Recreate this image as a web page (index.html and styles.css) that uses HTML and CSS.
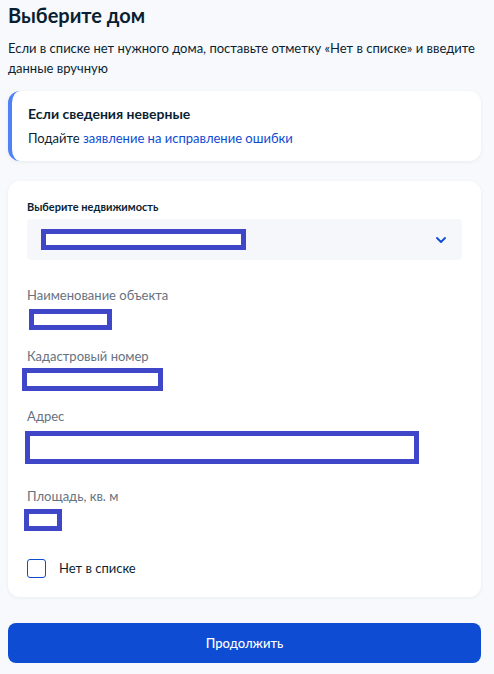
FILE: index.html
```html
<!DOCTYPE html>
<html lang="ru">
<head>
<meta charset="utf-8">
<link rel="stylesheet" href="styles.css">
</head>
<body>
<div class="page">
  <h1 class="title">Выберите дом</h1>
  <p class="subtitle">Если в списке нет нужного дома, поставьте отметку «Нет в списке» и введите данные вручную</p>

  <div class="info">
    <div class="info-title">Если сведения неверные</div>
    <div class="info-text">Подайте <a class="link" href="#">заявление на исправление ошибки</a></div>
  </div>

  <div class="card">
    <div class="select-label">Выберите недвижимость</div>
    <div class="select">
      <div class="redact redact-select"></div>
      <svg class="chevron" width="10" height="6" viewBox="0 0 10 6"><path d="M1 1l4 4 4-4" fill="none" stroke="#0d4cd3" stroke-width="1.8" stroke-linecap="round" stroke-linejoin="round"/></svg>
    </div>

    <div class="label l-name">Наименование объекта</div>
    <div class="redact r-name"></div>

    <div class="label l-cad">Кадастровый номер</div>
    <div class="redact r-cad"></div>

    <div class="label l-addr">Адрес</div>
    <div class="redact r-addr"></div>

    <div class="label l-area">Площадь, кв. м</div>
    <div class="redact r-area"></div>

    <label class="check">
      <span class="box"></span>
      <span class="check-text">Нет в списке</span>
    </label>
  </div>

  <button class="btn">Продолжить</button>
</div>
</body>
</html>
```

FILE: styles.css
```css
* { box-sizing: border-box; }
html, body { margin: 0; padding: 0; }
body {
  background: #f7f9fc;
  font-family: Lato, "Noto Sans", sans-serif;
  color: #0b1f33;
}
.page {
  width: 473px;
  margin-left: 8px;
  padding-top: 1px;
}
.title {
  margin: 0;
  font-size: 20px;
  line-height: 28px;
  font-weight: 700;
  color: #0b1f33;
}
.subtitle {
  margin: 9px 0 0;
  font-size: 13px;
  line-height: 20px;
  color: #0b1f33;
}
.info {
  margin-top: 13px;
  background: #fff;
  border-radius: 12px;
  border-left: 4px solid #4f82f7;
  padding: 13px 16px 13px 16px;
  box-shadow: 0 1px 4px rgba(11, 31, 51, 0.06);
}
.info-title {
  font-size: 14px;
  line-height: 20px;
  font-weight: 700;
}
.info-text {
  margin-top: 4px;
  font-size: 13px;
  line-height: 20px;
  color: #0b1f33;
}
.link {
  color: #0d4cd3;
  text-decoration: none;
}
.card {
  margin-top: 20px;
  background: #fff;
  border-radius: 12px;
  padding: 16px 19px 19px;
  box-shadow: 0 1px 4px rgba(11, 31, 51, 0.06);
}
.select-label {
  font-size: 11px;
  line-height: 20px;
  font-weight: 700;
  color: #0b1f33;
}
.select {
  margin-top: 2px;
  height: 41px;
  background: #f5f7fa;
  border-radius: 4px;
  display: flex;
  align-items: center;
  justify-content: space-between;
  padding: 0 16px 0 14px;
}
.redact {
  border: 5px solid #4046c8;
  background: #fff;
}
.redact-select { width: 205px; height: 21px; }
.chevron { display: block; margin-top: 1px; }
.label {
  font-size: 13px;
  line-height: 20px;
  color: #66727f;
}
.l-name { margin-top: 25px; }
.r-name { margin-top: 4px; margin-left: 2px; width: 83px; height: 21px; }
.l-cad { margin-top: 16px; }
.r-cad { margin-top: 2px; margin-left: -5px; width: 141px; height: 23px; }
.l-addr { margin-top: 15px; }
.r-addr { margin-top: 5px; margin-left: -2px; width: 394px; height: 33px; }
.l-area { margin-top: 22px; }
.r-area { margin-top: 3px; margin-left: -3px; width: 38px; height: 22px; }
.check {
  margin-top: 27px;
  display: flex;
  align-items: center;
  gap: 13px;
}
.box {
  width: 19px;
  height: 19px;
  border: 1.5px solid #0d4cd3;
  border-radius: 3px;
}
.check-text {
  font-size: 13px;
  line-height: 20px;
  color: #0b1f33;
}
.btn {
  display: block;
  width: 100%;
  margin-top: 26px;
  height: 40px;
  border: 0;
  border-radius: 8px;
  background: #0d4cd3;
  color: #fff;
  font-family: Lato, "Noto Sans", sans-serif;
  font-size: 13px;
  font-weight: 500;
}
```
